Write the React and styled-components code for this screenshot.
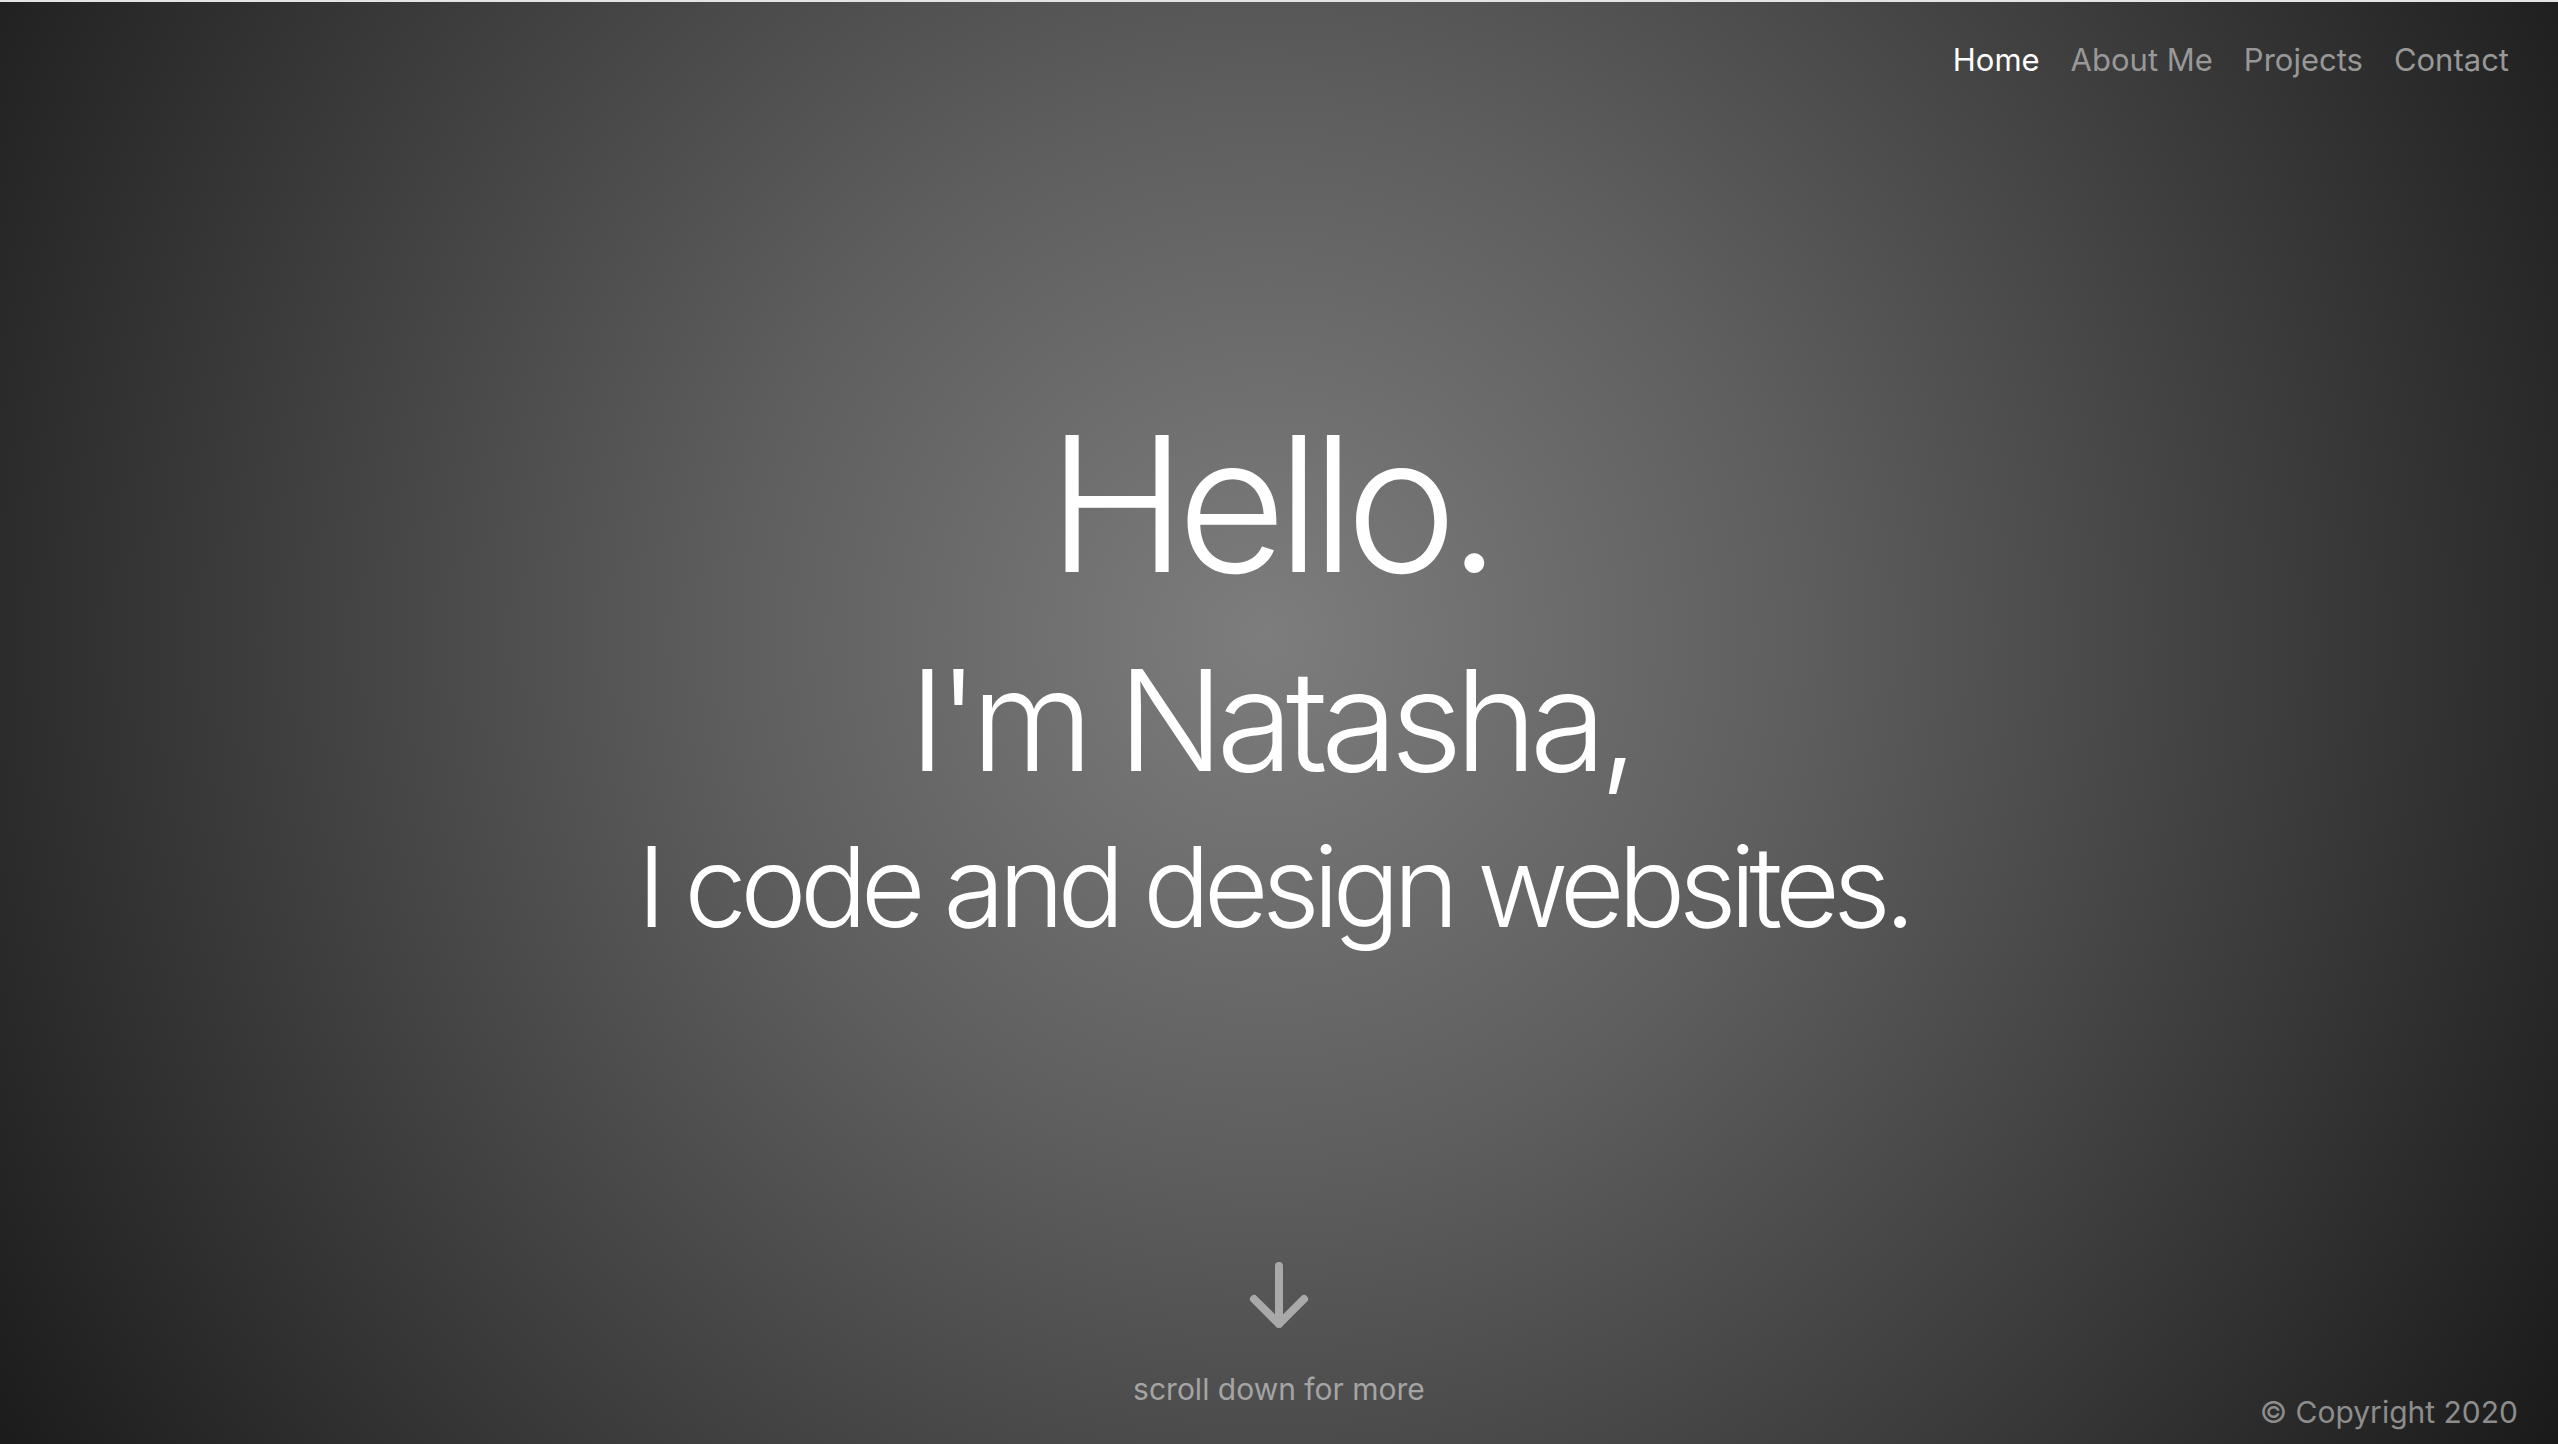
import React from "react";
import styled, { createGlobalStyle } from "styled-components";

const GlobalStyle = createGlobalStyle`
  html, body {
    margin: 0;
    padding: 0;
    background: #1b1b1b;
  }
  body {
    font-family: Inter, "Noto Sans", Roboto, sans-serif;
    -webkit-font-smoothing: antialiased;
  }
  * {
    box-sizing: border-box;
  }
`;

function ArrowDown() {
  return (
    <svg width="60" height="66" viewBox="0 0 60 66" fill="none">
      <path
        d="M30 4 V62 M5 37 L30 62 L55 37"
        stroke="#a9a9a9"
        strokeWidth="8"
        strokeLinecap="round"
        strokeLinejoin="round"
      />
    </svg>
  );
}

function App() {
  const links = ["Home", "About Me", "Projects", "Contact"];

  return (
    <>
      <GlobalStyle />
      <Page>
        <Nav>
          {links.map((label, i) => (
            <NavLink key={label} href="#" $active={i === 0}>
              {label}
            </NavLink>
          ))}
        </Nav>
        <Hero>
          <Hello>Hello.</Hello>
          <Name>I'm Natasha,</Name>
          <Tagline>I code and design websites.</Tagline>
        </Hero>
        <Footer>
          <span />
          <ScrollHint>
            <ArrowDown />
            <ScrollText>scroll down for more</ScrollText>
          </ScrollHint>
          <Copyright>© Copyright 2020</Copyright>
        </Footer>
      </Page>
    </>
  );
}

const Page = styled.div`
  min-height: 100vh;
  display: flex;
  flex-direction: column;
  border-top: 2px solid #e4e4e4;
  background: radial-gradient(
    circle farthest-corner at 49.5% 44%,
    #7d7d7d 0%,
    #5e5e5e 35%,
    #1a1a1a 100%
  );
  color: #fff;
`;

const Nav = styled.nav`
  display: flex;
  justify-content: flex-end;
  gap: 31px;
  padding: 42px 49px 0 0;
`;

const NavLink = styled.a`
  font-size: 31px;
  line-height: 1;
  font-weight: 400;
  text-decoration: none;
  color: ${(p) => (p.$active ? "#ffffff" : "#989898")};
`;

const Hero = styled.main`
  flex: 1;
  display: flex;
  flex-direction: column;
  align-items: center;
  padding-top: 335px;
  line-height: 1;
`;

const Hello = styled.h1`
  margin: 0;
  padding-right: 19px;
  font-size: 188px;
  font-weight: 300;
  letter-spacing: -0.05em;
`;

const Name = styled.h2`
  margin: 52px 0 0;
  padding-right: 18px;
  font-size: 140px;
  font-weight: 300;
  letter-spacing: -0.054em;
`;

const Tagline = styled.h3`
  margin: 40px 0 0;
  padding-right: 12px;
  font-size: 112px;
  font-weight: 300;
  letter-spacing: -0.06em;
`;

const Footer = styled.footer`
  display: grid;
  grid-template-columns: 1fr auto 1fr;
  align-items: end;
  padding: 0 40px 17px;
`;

const ScrollHint = styled.div`
  display: flex;
  flex-direction: column;
  align-items: center;
  gap: 46px;
  margin-bottom: 23px;
`;

const ScrollText = styled.span`
  font-size: 30px;
  line-height: 1;
  color: #a4a4a4;
`;

const Copyright = styled.span`
  justify-self: end;
  font-size: 30px;
  line-height: 1;
  color: #8d8d8d;
`;

export default App;
